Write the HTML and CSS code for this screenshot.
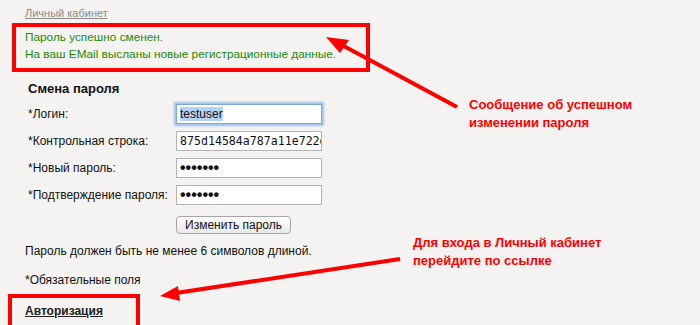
FILE: index.html
```html
<!DOCTYPE html>
<html lang="ru">
<head>
    <meta charset="UTF-8">
    <title>Смена пароля</title>
    <link rel="stylesheet" href="styles.css">
</head>
<body>

    <div class="page">
        <a class="crumb" href="#">Личный кабинет</a>

        <div class="message mark">
            <p>Пароль успешно сменен.</p>
            <p>На ваш EMail высланы новые регистрационные данные.</p>
        </div>

        <h3>Смена пароля</h3>
        <form class="form">
            <label>*Логин:</label>
            <div class="field focus"><span class="sel">testuser</span></div>
            <label>*Контрольная строка:</label>
            <div class="field mono">875d14584a787a11e722e</div>
            <label>*Новый пароль:</label>
            <div class="field dots">&bull;&bull;&bull;&bull;&bull;&bull;&bull;</div>
            <label>*Подтверждение пароля:</label>
            <div class="field dots">&bull;&bull;&bull;&bull;&bull;&bull;&bull;</div>
        </form>
        <div class="actions"><button type="button">Изменить пароль</button></div>

        <p class="note">Пароль должен быть не менее 6 символов длиной.</p>
        <p class="note req">*Обязательные поля</p>

        <div class="auth mark"><a href="#">Авторизация</a></div>

        <!-- callouts -->
        <div class="callout c1">Сообщение об успешном<br>изменении пароля</div>
        <div class="callout c2">Для входа в Личный кабинет<br>перейдите по ссылке</div>
        <svg class="arrows" width="700" height="325" viewBox="0 0 700 325">
            <line x1="457" y1="107" x2="340" y2="44" stroke="#ff0000" stroke-width="4"/>
            <polygon points="326,37 349,40 340,53" fill="#ff0000"/>
            <line x1="400" y1="259" x2="176" y2="293" stroke="#ff0000" stroke-width="4"/>
            <polygon points="160,296 178,286 180,301" fill="#ff0000"/>
        </svg>
    </div>

</body>
</html>
```

FILE: styles.css
```css
html, body { margin: 0; height: 100%; overflow: hidden; }
body { background: #f4f3f1; font-family: "Liberation Sans", Arial, sans-serif; font-size: 12px; color: #111; }
.page { position: relative; height: 325px; padding: 6px 0 0 25px; box-sizing: border-box; }
p { margin: 0; line-height: 14px; }

.crumb { font-size: 11px; color: #8a8a8a; text-decoration: underline; line-height: 13px; display: inline-block; }

.mark { border: 4px solid #ff0000; }
.message { margin: 3px 0 0 -13px; width: 341px; padding: 2px 0 5px 9px; color: #1d8a08; font-size: 11.8px; }
.message p { line-height: 17px; }

h3 { font-size: 13px; margin: 9px 0 0 3px; line-height: 16px; }

.form { display: grid; grid-template-columns: 148px 146px; grid-auto-rows: 20px; row-gap: 7px; margin: 7px 0 0 3px; align-items: center; }
.field {
    height: 20px; box-sizing: border-box; border: 1px solid #b4b4b4; background: #fff;
    padding: 0 3px; line-height: 18px; white-space: nowrap; overflow: hidden;
}
.field.focus { border-color: #7fa7d9; box-shadow: 0 0 2px 2px #9ec0ea; }
.sel { background: #b5d2f7; }
.mono { font-family: "DejaVu Sans Mono", monospace; font-size: 11.6px; }
.dots { font-size: 16px; line-height: 17px; font-weight: bold; }

.actions { padding: 11px 0 0 151px; }
button {
    display: block; height: 18px; padding: 0 8px; font: 12px "Liberation Sans", Arial, sans-serif;
    border: 1px solid #a6a6a6; border-radius: 4px; background: linear-gradient(#ffffff, #e9e9e9); color: #111;
}

.note { margin-top: 10px; }
.req { margin-top: 15px; }

.auth { margin: 7px 0 0 -17px; width: 132px; height: 40px; padding: 6px 0 0 13px; box-sizing: border-box; }
.auth a { font-weight: bold; color: #222; text-decoration: underline; }

.callout { position: absolute; color: #ff0000; font: bold 13px/18px "Liberation Sans", Arial, sans-serif; }
.c1 { left: 469px; top: 96px; }
.c2 { left: 413px; top: 234px; }
.arrows { position: absolute; left: 0; top: 0; pointer-events: none; }
```
